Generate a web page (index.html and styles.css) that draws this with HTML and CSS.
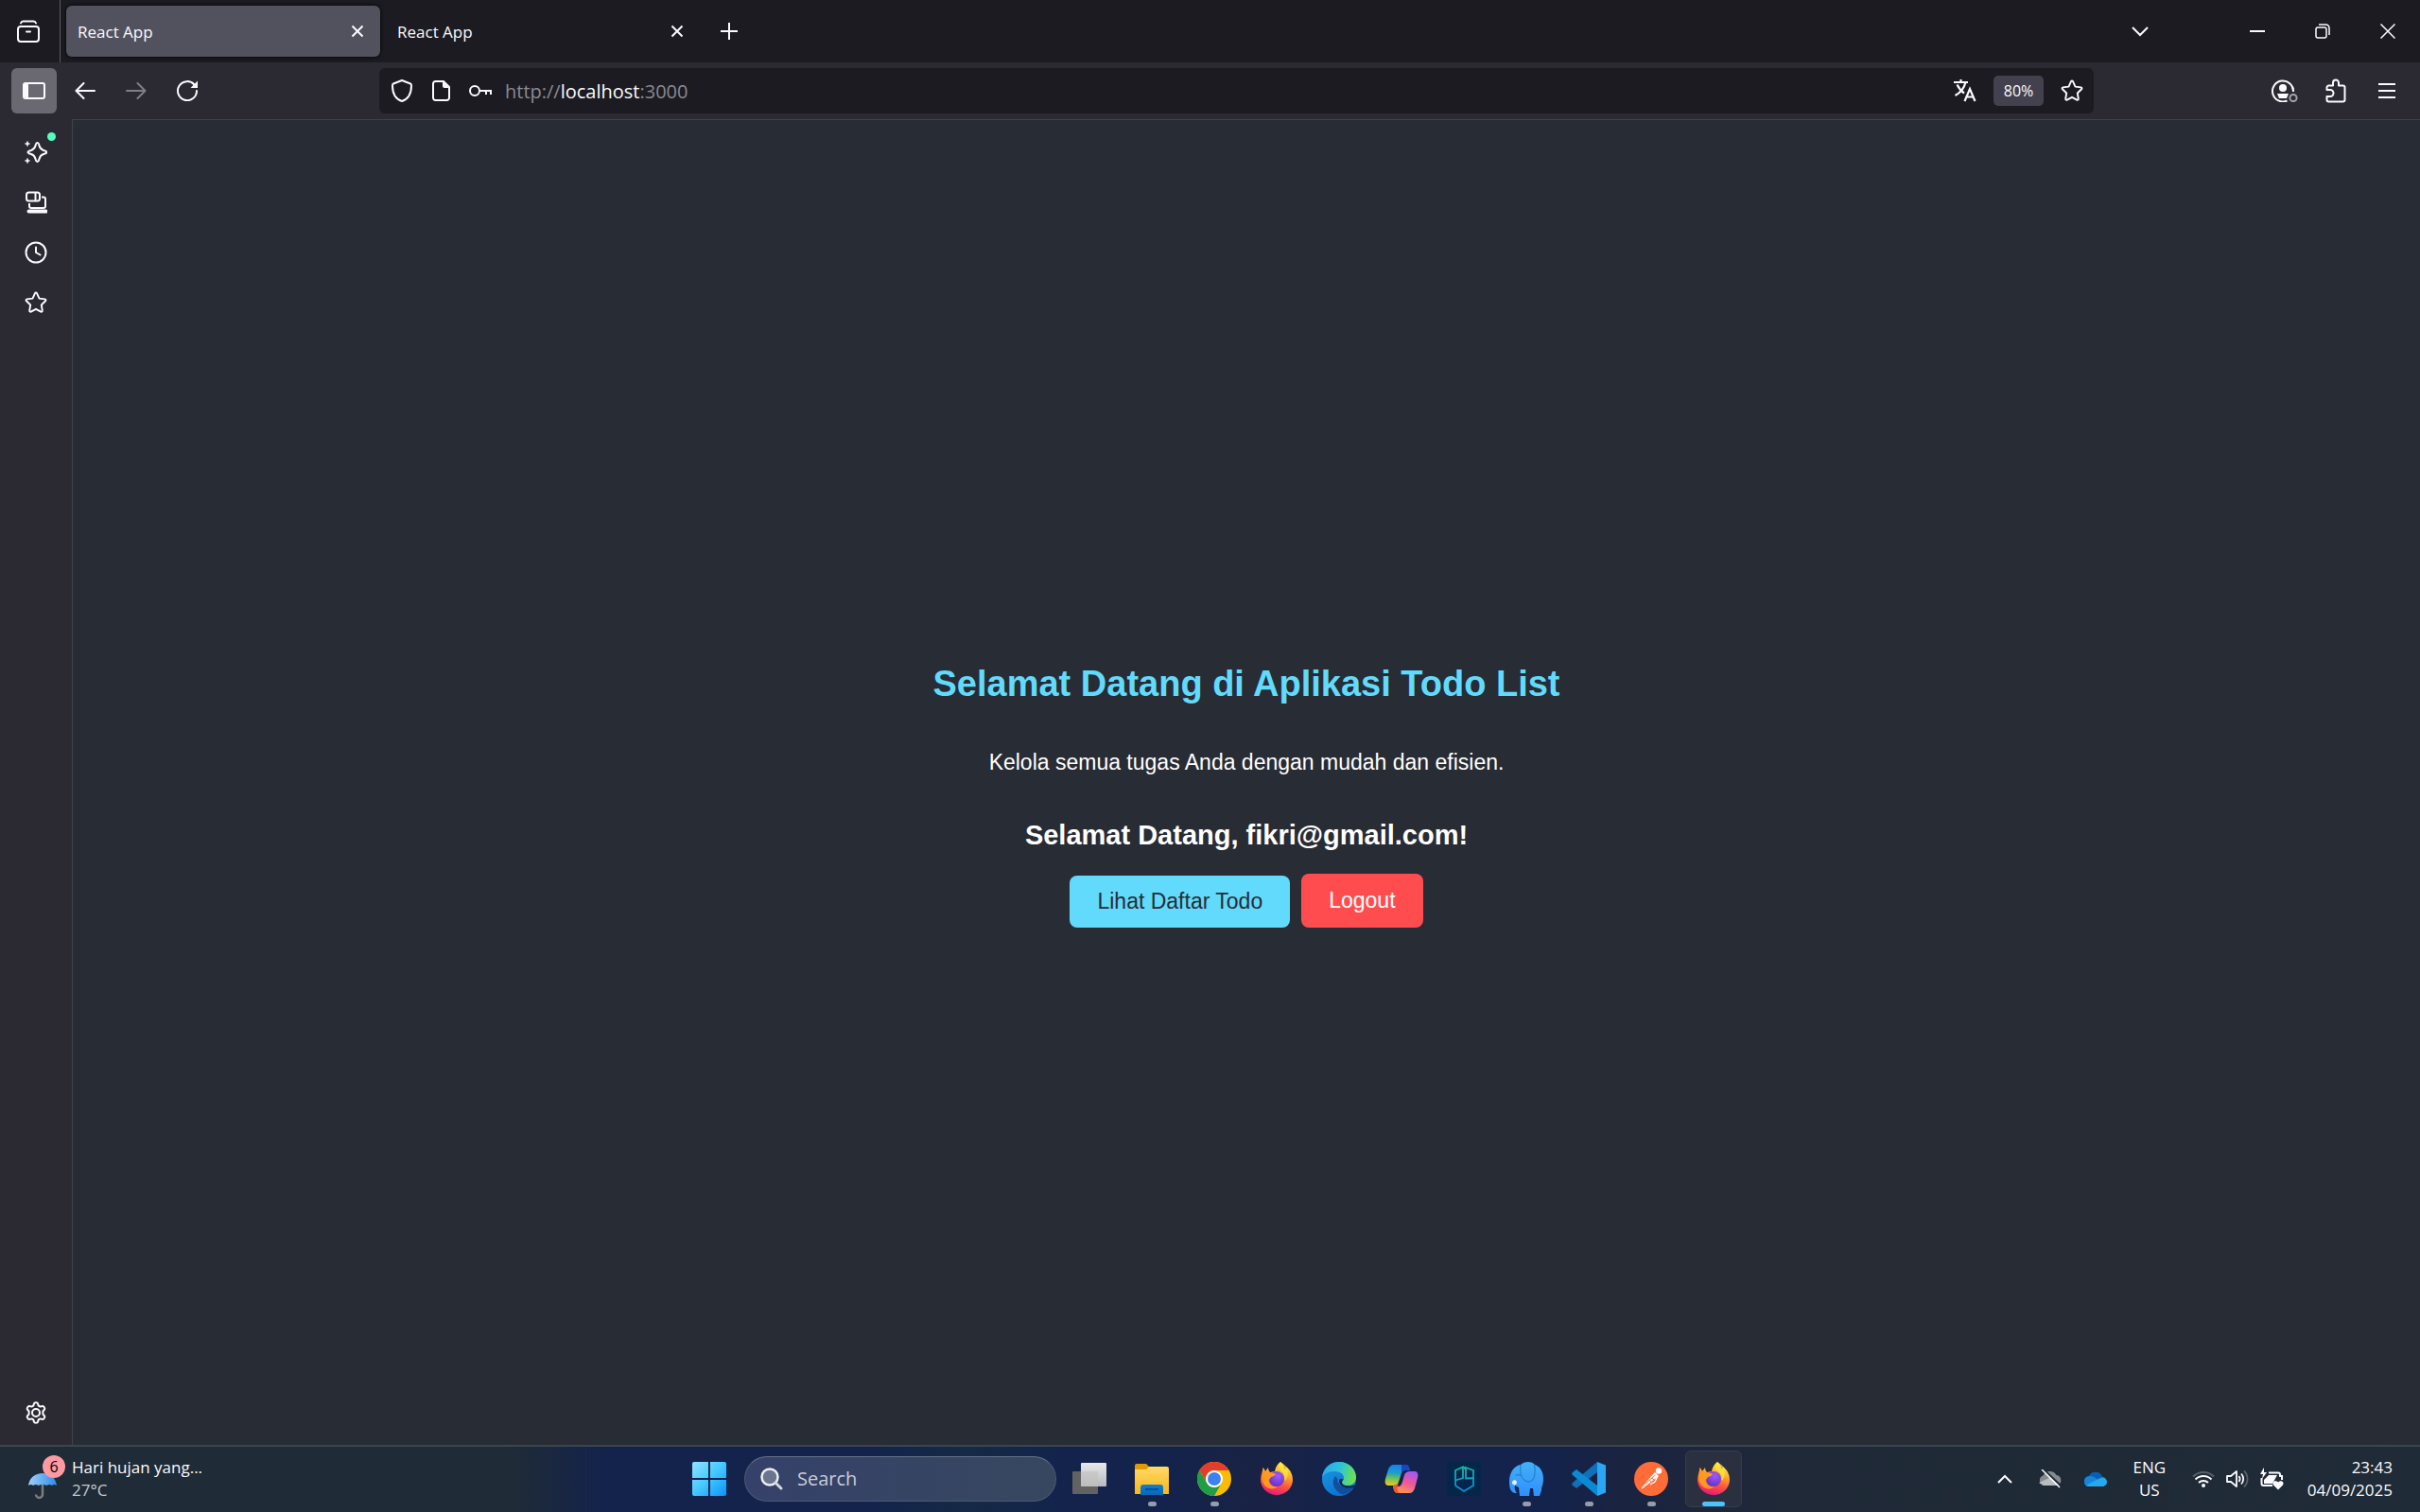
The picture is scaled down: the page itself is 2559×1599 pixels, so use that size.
FILE: index.html
```html
<!DOCTYPE html>
<html lang="id">
<head>
<meta charset="utf-8">
<title>React App</title>
<link rel="stylesheet" href="styles.css">
</head>
<body>
<svg class="defs" aria-hidden="true">
  <defs>
    <linearGradient id="win" x1="0" y1="0" x2="1" y2="1"><stop offset="0" stop-color="#8fe4ff"/><stop offset=".5" stop-color="#44c8ff"/><stop offset="1" stop-color="#0a93ff"/></linearGradient>
    <linearGradient id="pane" x1="0" y1="0" x2="0" y2="1"><stop offset="0" stop-color="#fff"/><stop offset="1" stop-color="#c9c9c9"/></linearGradient>
    <linearGradient id="folder" x1="0" y1="0" x2="0" y2="1"><stop offset="0" stop-color="#ffd96a"/><stop offset="1" stop-color="#fbb714"/></linearGradient>
    <linearGradient id="tray" x1="0" y1="0" x2="0" y2="1"><stop offset="0" stop-color="#0f7fd8"/><stop offset="1" stop-color="#0a67b8"/></linearGradient>
    <linearGradient id="fox" x1=".7" y1="0" x2=".4" y2="1"><stop offset="0" stop-color="#fff44f"/><stop offset=".35" stop-color="#ffb02e"/><stop offset=".65" stop-color="#ff5a36"/><stop offset="1" stop-color="#e8177c"/></linearGradient>
    <radialGradient id="globe" cx=".6" cy=".3" r=".8"><stop offset="0" stop-color="#a259ff"/><stop offset="1" stop-color="#5a2fc0"/></radialGradient>
    <linearGradient id="edge1" x1="0" y1=".3" x2="1" y2=".5"><stop offset="0" stop-color="#2aa8ee"/><stop offset=".5" stop-color="#2ec3d8"/><stop offset="1" stop-color="#6fe34a"/></linearGradient>
    <linearGradient id="edge2" x1="0" y1="0" x2=".6" y2="1"><stop offset="0" stop-color="#1b9de2"/><stop offset="1" stop-color="#0c6fcf"/></linearGradient>
    <linearGradient id="cop1" x1=".3" y1="0" x2=".2" y2="1"><stop offset="0" stop-color="#1a7ff0"/><stop offset=".4" stop-color="#1fa0c8"/><stop offset=".7" stop-color="#7cc84a"/><stop offset="1" stop-color="#f2c81e"/></linearGradient>
    <linearGradient id="cop2" x1=".7" y1="0" x2=".3" y2="1"><stop offset="0" stop-color="#a259f0"/><stop offset=".5" stop-color="#f0589a"/><stop offset="1" stop-color="#ff9a4a"/></linearGradient>
    <linearGradient id="pg" x1="0" y1="0" x2="0" y2="1"><stop offset="0" stop-color="#14b8a6"/><stop offset="1" stop-color="#1687d8"/></linearGradient>
    <linearGradient id="eleph" x1="0" y1="0" x2="0" y2="1"><stop offset="0" stop-color="#44b0f4"/><stop offset="1" stop-color="#2f8fff"/></linearGradient>
    <linearGradient id="umb" x1="0" y1="0" x2="1" y2="0"><stop offset="0" stop-color="#9fd0fb"/><stop offset="1" stop-color="#2f8ce8"/></linearGradient>
    <symbol id="i-close" viewBox="0 0 16 16"><path d="M2.500 2.500l11 11M13.500 2.500l-11 11" fill="none" stroke="currentColor" stroke-width="2"/></symbol>
    <symbol id="i-star" viewBox="0 0 24 24"><path d="M11 2.200a1.100 1.100 0 0 1 2 0l2.500 5.400 6 .8a1.100 1.100 0 0 1 .6 1.900l-4.300 4.200 1 6a1.100 1.100 0 0 1-1.600 1.200L12 18.800l-5.200 2.900a1.100 1.100 0 0 1-1.600-1.200l1-6-4.300-4.200a1.100 1.100 0 0 1 .6-1.900l6-.8z" fill="none" stroke="currentColor" stroke-width="1.900" stroke-linejoin="round"/></symbol>
    <symbol id="i-fox" viewBox="0 0 36 36">
      <path d="M22 0c3 2 4 5 4 8 2-1 2-2 2-3 5 4 7 9 7 14a17 16 0 0 1-34 0C1 14 3 11 3.500 6c1 1 2 2 2.500 4l3-4c0 2 1 4 2 5l5-1c1-5 3-8 6-10z" fill="url(#fox)"/>
      <circle cx="18" cy="18" r="8" fill="url(#globe)"/>
      <path d="M3 13c3-3 6-2.500 9-1.500 2 0 4 .5 5 1.500-1 2-3 2.500-5 3-1 2-3 3-2 5 1 4 5 6 9 5-4 4-12 3-15-3-2-3-2-7-1-10z" fill="#ff9a1e"/>
      <path d="M22 0c-2 4-2 7 1 10 3 2 4 6 3 10 4-2 5-9 2-15-1-2-4-3-6-5z" fill="#ffe33c" opacity=".8"/>
    </symbol>
  </defs>
</svg>

<header class="tabbar">
  <button class="view" aria-label="Firefox View"><svg width="26" height="26" viewBox="0 0 26 26" fill="none" stroke="currentColor" stroke-width="2" stroke-linecap="round"><rect x="2" y="8" width="22" height="16" rx="3"/><path d="M5 4.500C5.500 3 6.500 2.500 7.500 2.500h11c1 0 2 .5 2.500 2M11 13.500h4"/></svg></button>
  <div class="tab tab-active"><span>React App</span><button aria-label="Close tab"><svg width="16" height="16"><use href="#i-close"/></svg></button></div>
  <div class="tab"><span>React App</span><button aria-label="Close tab"><svg width="16" height="16"><use href="#i-close"/></svg></button></div>
  <button class="newtab" aria-label="New tab"><svg width="18" height="18" viewBox="0 0 18 18" stroke="currentColor" stroke-width="2"><path d="M9 0v18M0 9h18"/></svg></button>
  <button class="list-tabs" aria-label="List all tabs"><svg width="18" height="12" viewBox="0 0 18 12" fill="none" stroke="currentColor" stroke-width="2"><path d="M1 2l8 8 8-8"/></svg></button>
  <div class="window-buttons">
    <button aria-label="Minimize"><svg width="16" height="16" viewBox="0 0 16 16" stroke="currentColor" stroke-width="2"><path d="M0 8h16"/></svg></button>
    <button aria-label="Restore"><svg width="16" height="16" viewBox="0 0 16 16" fill="none" stroke="currentColor" stroke-width="1.500"><rect x="1" y="4" width="11" height="11" rx="2"/><path d="M4 1h7.500A3.500 3.500 0 0 1 15 4.500V12"/></svg></button>
    <button aria-label="Close"><svg width="16" height="16" viewBox="0 0 16 16" stroke="currentColor" stroke-width="1.500"><path d="M.5.5l15 15M15.500.5l-15 15"/></svg></button>
  </div>
</header>

<nav class="toolbar">
  <div class="nav-buttons">
    <button class="side-toggle" aria-label="Sidebar"><svg width="24" height="18" viewBox="0 0 24 18"><rect x="1" y="1" width="22" height="16" rx="2" fill="none" stroke="currentColor" stroke-width="2"/><path d="M1 1h5v16H1z" fill="currentColor"/></svg></button>
    <button aria-label="Back"><svg width="22" height="18" viewBox="0 0 22 18" fill="none" stroke="currentColor" stroke-width="2" stroke-linecap="round" stroke-linejoin="round"><path d="M9.500 1L1.500 9l8 8M2 9h19"/></svg></button>
    <button class="dim" aria-label="Forward" disabled><svg width="22" height="18" viewBox="0 0 22 18" fill="none" stroke="currentColor" stroke-width="2" stroke-linecap="round" stroke-linejoin="round"><path d="M12.500 1l8 8-8 8M20 9H1"/></svg></button>
    <button aria-label="Reload"><svg width="22" height="22" viewBox="0 0 22 22"><path d="M18.500 4.500A10 10 0 1 0 21 11" fill="none" stroke="currentColor" stroke-width="2" stroke-linecap="round"/><path d="M22 .5V8h-7.500z" fill="currentColor"/></svg></button>
  </div>
  <div class="urlbar">
    <div class="site-icons">
      <svg width="22" height="24" viewBox="0 0 22 24" fill="none" stroke="currentColor" stroke-width="2" stroke-linejoin="round"><path d="M11 1l9 3.500c1 .4 1 1 1 2C21 15 17 21 11 23 5 21 1 15 1 6.500c0-1 0-1.600 1-2z"/></svg>
      <svg width="20" height="22" viewBox="0 0 20 22"><path d="M4 1h9l6 6v11.500a2.500 2.500 0 0 1-2.500 2.500h-12A2.500 2.500 0 0 1 2 18.500v-15A2.500 2.500 0 0 1 4.500 1z" fill="none" stroke="currentColor" stroke-width="2"/><path d="M12 1l7.500 7H14a2 2 0 0 1-2-2z" fill="currentColor"/></svg>
      <svg width="24" height="14" viewBox="0 0 24 14" fill="none" stroke="currentColor" stroke-width="2"><circle cx="6" cy="7" r="5"/><path d="M11 7h12v4M18 7v4"/></svg>
    </div>
    <a class="url" href="#">http://<b>localhost</b>:3000</a>
    <div class="page-actions">
      <button aria-label="Translate"><svg width="24" height="24" viewBox="0 0 24 24" fill="none" stroke="currentColor" stroke-width="2.200"><path d="M0 3h15M7.500 0v3M12.500 3C11 9 7 14 1.500 17M3.500 5.500c2 4 4.500 7 7.500 9"/><path d="M11.500 23l5.500-13 5.500 13M13.500 18.500h7"/></svg></button>
      <button class="zoom">80%</button>
      <button aria-label="Bookmark"><svg width="24" height="24"><use href="#i-star"/></svg></button>
    </div>
  </div>
  <div class="tools">
    <button aria-label="Account"><svg width="28" height="24" viewBox="0 0 28 24"><path d="M16.500 22.500A11 11 0 1 1 23 12.500" fill="none" stroke="currentColor" stroke-width="2"/><path d="M23 13a11 11 0 0 0-1-5" stroke="currentColor" stroke-width="2" fill="none"/><circle cx="12" cy="9" r="4" fill="currentColor"/><path d="M6 15h12l-2 5H8z" fill="currentColor"/><circle cx="23" cy="19.500" r="3.600" fill="none" stroke="#a3a2aa" stroke-width="2"/></svg></button>
    <button aria-label="Extensions"><svg width="22" height="26" viewBox="0 0 22 26" fill="none" stroke="currentColor" stroke-width="2" stroke-linejoin="round"><path d="M1.500 12V9.500a2 2 0 0 1 2-2H8V4.500a3 3 0 0 1 6 0v3h4.500a2 2 0 0 1 2 2v13a2 2 0 0 1-2 2h-15a2 2 0 0 1-2-2V19H5a3.500 3.500 0 0 0 0-7z"/></svg></button>
    <button aria-label="Menu"><svg width="18" height="16" viewBox="0 0 18 16" stroke="currentColor" stroke-width="2"><path d="M0 1h18M0 8h18M0 15h18"/></svg></button>
  </div>
</nav>

<div class="main">
  <aside class="sidebar">
    <button class="ai" aria-label="AI chatbot"><svg width="24" height="24" viewBox="0 0 24 24"><path d="M13.500 2c1.500 0 1.500 1 2 3 .8 3 1.500 4 4.500 5 2.500.7 3.500.8 3.500 2s-1 1.300-3.500 2c-3 1-3.700 2-4.500 5-.5 2-.5 3-2 3s-1.500-1-2-3c-.8-3-1.500-4-4.500-5-2.500-.7-3.500-.8-3.500-2s1-1.300 3.500-2c3-1 3.700-2 4.500-5 .5-2 .5-3 2-3z" fill="none" stroke="currentColor" stroke-width="2"/><path d="M3 .5v5M.5 3h5M3 18.500v5M.5 21h5" stroke="currentColor" stroke-width="1.600"/></svg></button>
    <button aria-label="Synced tabs"><svg width="24" height="24" viewBox="0 0 24 24" fill="none" stroke="currentColor" stroke-width="2"><rect x="2" y="1.500" width="14" height="9" rx="2.500"/><path d="M11.500 2v8M18 6.500h2a2 2 0 0 1 2 2V16a2 2 0 0 1-2 2H7a2 2 0 0 1-2-2v-3"/><path d="M4.500 21.500h18" stroke-width="4" stroke-linecap="round"/></svg></button>
    <button aria-label="History"><svg width="24" height="24" viewBox="0 0 24 24" fill="none" stroke="currentColor" stroke-width="2" stroke-linecap="round"><circle cx="12" cy="12" r="10.500"/><path d="M12 6.500V12l4.500 2.500"/></svg></button>
    <button aria-label="Bookmarks"><svg width="24" height="24"><use href="#i-star"/></svg></button>
    <button class="settings" aria-label="Settings"><svg width="24" height="24" viewBox="0 0 24 24" fill="none" stroke="currentColor" stroke-width="2" stroke-linejoin="round"><path d="M10 2.200c.3-1.300 3.700-1.300 4 0l.7 2.400 1.800 1 2.400-.6c1.300-.3 3 2.500 2.200 3.500L19.400 10.400v3.200l1.700 1.900c.8 1-.9 3.800-2.200 3.500l-2.400-.6-1.800 1-.7 2.400c-.3 1.300-3.700 1.300-4 0l-.7-2.400-1.800-1-2.400.6c-1.300.3-3-2.500-2.200-3.500l1.700-1.900v-3.200L2.900 8.500c-.8-1 .9-3.800 2.200-3.500l2.400.6 1.800-1z"/><circle cx="12" cy="12" r="4"/></svg></button>
  </aside>
  <main class="page">
    <h1>Selamat Datang di Aplikasi Todo List</h1>
    <p>Kelola semua tugas Anda dengan mudah dan efisien.</p>
    <h2>Selamat Datang, fikri@gmail.com!</h2>
    <div class="actions">
      <a class="btn btn-list" href="#">Lihat Daftar Todo</a>
      <button class="btn btn-logout">Logout</button>
    </div>
  </main>
</div>

<footer class="taskbar">
  <button class="weather">
    <span class="weather-icon"><svg width="30" height="30" viewBox="0 0 30 30"><path d="M15 11v13.500a3.500 3.500 0 0 1-7 0" fill="none" stroke="#7d7d7d" stroke-width="2.500"/><path d="M0 15C1 7 7 2 15 2s14 5 15 13c-2-1.500-4-1.500-5 0-2-1.500-4-1.500-5.500 0-2-1.500-7-1.500-9 0-1.500-1.500-4-1.500-5.500 0-1.500-1.500-3-1.500-5 0z" fill="url(#umb)"/></svg><span class="count">6</span></span>
    <span class="weather-text"><span>Hari hujan yang...</span><span class="temp">27°C</span></span>
  </button>
  <div class="apps">
    <button class="start" aria-label="Start"><svg width="36" height="36" viewBox="0 0 36 36"><path d="M2 0h15v17H0V2a2 2 0 0 1 2-2zM19 0h15a2 2 0 0 1 2 2v15H19zM0 19h17v17H2a2 2 0 0 1-2-2zM19 19h17v15a2 2 0 0 1-2 2H19z" fill="url(#win)"/></svg></button>
    <label class="search"><svg width="24" height="24" viewBox="0 0 24 24"><circle cx="10" cy="10" r="8.500" fill="#6a7590" stroke="#eceef2" stroke-width="2.500"/><path d="M16 16l6 6" stroke="#d5d8df" stroke-width="3" stroke-linecap="round"/></svg><input type="text" placeholder="Search" aria-label="Search"></label>
    <button class="app" aria-label="Task view"><svg width="36" height="36" viewBox="0 0 36 36"><rect x="0" y="10" width="27" height="24" rx="1" fill="#626262"/><rect x="9" y="1" width="27" height="25" rx="1" fill="url(#pane)" opacity=".9"/><path d="M9 10h18v16H9z" fill="#bcbcbc" opacity=".6"/></svg></button>
    <button class="app running" aria-label="File Explorer"><svg width="36" height="36" viewBox="0 0 36 36"><path d="M0 4a2 2 0 0 1 2-2h10l3 3v6H0z" fill="#e09b00"/><path d="M0 8h12l3-3h19a2 2 0 0 1 2 2v27H0z" fill="url(#folder)"/><path d="M6 35V27a3 3 0 0 1 3-3h18a3 3 0 0 1 3 3v8z" fill="url(#tray)"/><path d="M11 29h14" stroke="#08508f" stroke-width="2"/></svg></button>
    <button class="app running" aria-label="Chrome"><svg width="36" height="36" viewBox="0 0 36 36"><circle cx="18" cy="18" r="18" fill="#fbbc05"/><path d="M2.400 9A18 18 0 0 1 33.600 9H18a9 9 0 0 0-7.800 13.500z" fill="#e43e2b"/><path d="M2.400 9l7.800 13.500A9 9 0 0 0 25.800 22.500L18 36A18 18 0 0 1 2.400 9z" fill="#1e9e48"/><circle cx="18" cy="18" r="9" fill="#fff"/><circle cx="18" cy="18" r="7" fill="#3b82f0"/></svg></button>
    <button class="app" aria-label="Firefox"><svg width="36" height="36"><use href="#i-fox"/></svg></button>
    <button class="app" aria-label="Edge"><svg width="36" height="36" viewBox="0 0 36 36"><circle cx="18" cy="18" r="18" fill="url(#edge2)"/><path d="M0 17C1 6 9 0 18 0c11 0 18 8 18 16 0 6-4 9-9 9-4 0-6-1-6-3s2-2 2-5c0-5-5-7-10-7C7 10 2 12 0 17z" fill="url(#edge1)"/><path d="M14 15c-5 6-1 17 8 19.500 5-.5 9-4 11.500-8.500-7 3-16 0-17-6 0-2-1-4-2.500-5z" fill="#114f9e"/><path d="M22.500 18.500c-1.500 1.500-2 3-1 4.500 2 3 9 3 12.500 1.500l3 1.500-4 1c-7 2-15-1-15-7 0-2 2-3 4.500-1.500z" fill="#14234b"/></svg></button>
    <button class="app" aria-label="Copilot"><svg width="36" height="36" viewBox="0 0 36 36"><path d="M10 3h12c3 0 4 2 5 6h-5c-3 0-4 2-5 6l-2 6c-1 3-3 4-6 4H4c-3 0-4-3-3-7L4 8c1-3 3-5 6-5z" fill="url(#cop1)"/><path d="M26 33H14c-3 0-4-2-5-7h5c3 0 4-2 5-5l2-7c1-3 3-4 6-4h5c3 0 4 3 3 7l-3 11c-1 3-3 5-6 5z" fill="url(#cop2)"/><path d="M18 3h4c3 0 4 2 5 6h-5c-2 0-3 1-4 3z" fill="#1646c8"/><path d="M9 25c3 0 5-1 6-4l-1 5c-1 3 0 7 3 7h-3c-3 0-4-3-5-8z" fill="#f0562c"/></svg></button>
    <button class="app" aria-label="Postgres tool"><svg width="36" height="36" viewBox="0 0 36 36"><path d="M0 0h36v36H0z" fill="#03264a"/><path d="M9 25V9l8-3.500V17l-8 2.500M28 17l-8 .5V6l8 3v16l-10 6-9-6M19 5v3" fill="none" stroke="url(#pg)" stroke-width="1.800"/></svg></button>
    <button class="app running" aria-label="TablePlus"><svg width="36" height="36" viewBox="0 0 36 36"><path d="M0 21C0 10 6 4 12 3c4-4 12-4 15 0 6 2 9 8 9 15 0 6-2 8-2 12l-2 6h-6l-1-8h-3l-1 8h-10l-1-9-4-2c-1 3 0 5 2 8H6C1 32 0 27 0 21z" fill="url(#eleph)"/><path d="M12 3c-1 9 1 17 8 18 5 0 7-5 7-9 1-4 0-7-1-9M7 15c1-2 4-2 5 0" fill="none" stroke="#2583cf" stroke-width="1.300"/><path d="M3 21c2-3 5-2 5 1-1 3-3 3-5 1z" fill="#dff0ff"/></svg></button>
    <button class="app running" aria-label="VS Code"><svg width="36" height="36" viewBox="0 0 36 36"><path d="M27 0v11L5 28l-4-3c-1-1-1-2 0-3z" fill="#0f6fb8"/><path d="M27 36V25L5 8 1 11c-1 1-1 2 0 3z" fill="#0b8ad4"/><path d="M27 0l9 3.500v29L27 36z" fill="#2aa6f2"/></svg></button>
    <button class="app running" aria-label="Postman"><svg width="36" height="36" viewBox="0 0 36 36"><circle cx="18" cy="18" r="18" fill="#ff6c37"/><circle cx="26" cy="9.500" r="3.200" fill="#fff"/><path d="M22 11l4 4-12 9-6 4 5-7z" fill="#fff"/><path d="M24 14L8 28M25 15l-3 6-5 3" stroke="#fff" stroke-width="1.300" fill="none"/><path d="M22.500 14L12 23M19 17l2 2M16 19l2 2" stroke="#ff6c37" stroke-width="1"/></svg></button>
    <button class="app current" aria-label="Firefox window"><svg width="36" height="36"><use href="#i-fox"/></svg></button>
  </div>
  <div class="status">
    <button class="icon-cell" aria-label="Hidden icons"><svg width="16" height="10" viewBox="0 0 16 10" fill="none" stroke="currentColor" stroke-width="2"><path d="M1 9l7-7 7 7"/></svg></button>
    <button class="icon-cell" aria-label="Cloud paused"><svg width="26" height="20" viewBox="0 0 26 20"><path d="M6 17a5.500 5.500 0 0 1-.5-10.500A8 8 0 0 1 19.500 6 5.600 5.600 0 0 1 20 17z" fill="#858a90"/><path d="M1 14l13-6 9 8-3 1H6z" fill="#b9bcc0"/><path d="M6 0l18 17" stroke="#1f2b36" stroke-width="2"/><path d="M4 0l19 19" stroke="#fff" stroke-width="1.500"/></svg></button>
    <button class="icon-cell" aria-label="OneDrive"><svg width="24" height="16" viewBox="0 0 24 16"><path d="M5.500 16a5.500 5.500 0 0 1-.6-11A7.800 7.800 0 0 1 19 5.500 5.300 5.300 0 0 1 18.700 16z" fill="#0a5fb4"/><path d="M0 11c0-4 3-6 6-6 4 0 7 3 10 5l-12 6c-2 0-4-2-4-5z" fill="#1286dc"/><path d="M2.500 14.500L16 7.500c5-3 8 1 8 4 0 2-2 4.500-5 4.500H6c-1.500 0-2.500-.5-3.500-1.500z" fill="#28a8ea"/></svg></button>
    <button class="lang"><span>ENG</span><span>US</span></button>
    <button class="quick" aria-label="Network, sound, battery">
      <svg width="24" height="18" viewBox="0 0 24 18" fill="none" stroke="currentColor" stroke-width="2"><path d="M1 6.500a15.500 15.500 0 0 1 22 0" stroke="#56606a"/><path d="M3.500 9.500a12 12 0 0 1 17 0M7 13a7 7 0 0 1 10 0"/><circle cx="12" cy="16" r="1" fill="currentColor"/></svg>
      <svg width="24" height="20" viewBox="0 0 24 20" fill="none" stroke="currentColor" stroke-width="1.800" stroke-linejoin="round"><path d="M1 7h4l6-5v16l-6-5H1zM13.500 7a5 5 0 0 1 0 6M16 4.500a8 8 0 0 1 0 11"/><path d="M19 1.500a12 12 0 0 1 0 17" stroke="#56606a"/></svg>
      <svg width="26" height="24" viewBox="0 0 26 24"><path d="M9 5.500h10a2 2 0 0 1 2 2V9h2v4M1.500 11v6a2 2 0 0 0 2 2H13" fill="none" stroke="currentColor" stroke-width="2"/><path d="M9 8h9l-5 9H4v-4z" fill="currentColor"/><path d="M4 0L0 7h3l-1 5 5-7H4zM19 23.500l-5-5c-2-3 2-6 5-3 3-3 7 0 5 3z" fill="currentColor"/></svg>
    </button>
    <button class="clock"><span>23:43</span><span>04/09/2025</span></button>
  </div>
</footer>
</body>
</html>
```

FILE: styles.css
```css
* { box-sizing: border-box; }

body {
  margin: 0;
  min-height: 100vh;
  display: flex;
  flex-direction: column;
  background: #1c1b22;
  color: #fbfbfe;
  font-family: "Open Sans", "Noto Sans", sans-serif;
  font-size: 17px;
}

button {
  margin: 0;
  padding: 0;
  border: 0;
  background: none;
  color: inherit;
  font: inherit;
  display: flex;
  align-items: center;
  justify-content: center;
}

svg { display: block; flex: none; }
.defs { position: absolute; width: 0; height: 0; }

/* Tab strip */
.tabbar { display: flex; align-items: center; height: 66px; }
.view { width: 64px; height: 66px; padding-right: 4px; border-right: 1px solid #5b5b66; }
.tab {
  width: 332px;
  height: 54px;
  margin-left: 6px;
  padding: 0 15px 0 12px;
  display: flex;
  align-items: center;
  justify-content: space-between;
  border-radius: 6px;
}
.tab-active { background: #52525e; box-shadow: 0 0 4px #000; }
.tab button { width: 18px; height: 32px; }
.newtab { width: 48px; margin-left: 7px; height: 48px; }
.list-tabs { width: 48px; height: 48px; margin-left: auto; margin-right: 65px; }
.window-buttons { display: flex; }
.window-buttons button { width: 69px; height: 66px; }

/* Navigation toolbar */
.toolbar {
  display: flex;
  align-items: center;
  justify-content: space-between;
  height: 60px;
  padding: 0 11px 0 12px;
  background: #2b2a33;
}
.nav-buttons { display: flex; gap: 6px; width: 389px; }
.nav-buttons button { width: 48px; height: 48px; border-radius: 6px; }
.nav-buttons .side-toggle { background: #6a6972; }
.dim { opacity: .4; }
.urlbar {
  flex: 1;
  display: flex;
  align-items: center;
  height: 48px;
  padding: 0 11px 0 13px;
  gap: 14px;
  border-radius: 6px;
  background: #1c1b22;
}
.site-icons { display: flex; align-items: center; gap: 20px; }
.page-actions { display: flex; align-items: center; gap: 18px; }
.url { flex: 1; color: #8b8a92; text-decoration: none; font-size: 20px; }
.url b { color: #fbfbfe; font-weight: 400; }
.zoom { width: 53px; height: 32px; border-radius: 5px; background: #42414d; font-size: 16px; }
.tools { display: flex; gap: 6px; width: 334px; justify-content: flex-end; }
.tools button { width: 48px; height: 48px; }

/* Sidebar and page */
.main { flex: 1; display: flex; background: #2b2a33; }
.sidebar {
  width: 76px;
  padding: 11px 14px 10px;
  display: flex;
  flex-direction: column;
  gap: 5px;
}
.sidebar button { width: 48px; height: 48px; }
.ai { position: relative; }
.ai::after {
  content: "";
  position: absolute;
  top: 3px;
  right: 3px;
  width: 9px;
  height: 9px;
  border-radius: 50%;
  background: #54ffbd;
}
.sidebar .settings { margin-top: auto; }
.page {
  flex: 1;
  display: flex;
  flex-direction: column;
  align-items: center;
  justify-content: center;
  padding-top: 26px;
  border-top: 1px solid #42424a;
  border-left: 1px solid #42424a;
  background: #282c34;
  color: #fff;
  font-family: "Liberation Sans", Arial, sans-serif;
}
.page h1 { margin: 0; font-size: 38px; line-height: 44px; color: #61dafb; }
.page p { margin: 48px 0; font-size: 23px; line-height: 26px; }
.page h2 { margin: 0 0 24px; font-size: 29px; line-height: 33px; }
.actions { display: flex; align-items: flex-end; gap: 12px; }
.btn { font-size: 23px; line-height: 25px; padding: 15px 29px; border-radius: 8px; }
.btn-list { background: #61dafb; color: #282c34; text-decoration: none; }
.btn-logout { background: #ff4d4f; color: #fff; padding: 16px 29px; }

/* Taskbar */
.taskbar {
  display: grid;
  grid-template-columns: 1fr auto 1fr;
  align-items: center;
  height: 71px;
  padding-bottom: 2px;
  border-top: 2px solid #3c454f;
  background: linear-gradient(90deg, #1f2b36 0, #1f2b36 21%, #13234c 25%, #13234c 36%, #152a45 40%, #13234c 44%, #13234c 48%, #192244 52%, #13234c 56%, #13234c 64%, #1a2340 67%, #1f2937 74%, #1f2b36 100%);
}
.weather { justify-self: start; gap: 13px; padding-left: 30px; line-height: 24px; text-align: left; }
.weather-icon { position: relative; padding-top: 14px; width: 33px; }
.count {
  position: absolute;
  top: -3px;
  right: -6px;
  width: 24px;
  height: 24px;
  border-radius: 50%;
  background: #ff99a4;
  color: #000;
  font-size: 16px;
  text-align: center;
}
.weather-text { display: grid; }
.temp { color: #c6cacf; }
.apps { display: flex; align-items: center; padding-left: 12px; }
.start { width: 48px; margin-right: 13px; }
.search {
  display: flex;
  align-items: center;
  gap: 15px;
  width: 330px;
  height: 48px;
  margin-right: 2px;
  padding: 0 16px;
  border: 1px solid #4d5a72;
  border-top-color: #66718a;
  border-radius: 24px;
  background: linear-gradient(90deg, #35416a, #37475f);
}
.search input { flex: 1; min-width: 0; padding: 0; border: 0; outline: 0; background: none; font: inherit; font-size: 20px; color: #fff; }
.search input::placeholder { color: #c9cdd6; opacity: 1; }
.app { position: relative; width: 60px; height: 60px; margin: 0 3px; border-radius: 6px; }
.running::after, .current::after {
  content: "";
  position: absolute;
  bottom: 1px;
  width: 9px;
  height: 5px;
  border-radius: 3px;
  background: #969cab;
}
.current { border: 1px solid #353d4b; background: #2a3040; }
.current::after { bottom: 0; width: 24px; background: #4cc2ff; }
.status { justify-self: end; display: flex; align-items: center; padding-right: 23px; line-height: 24px; }
.icon-cell { width: 48px; height: 48px; }
.lang { width: 66px; flex-direction: column; }
.quick { gap: 12px; padding: 0 12px; }
.clock { flex-direction: column; align-items: flex-end; padding-left: 12px; padding-right: 6px; }
```
